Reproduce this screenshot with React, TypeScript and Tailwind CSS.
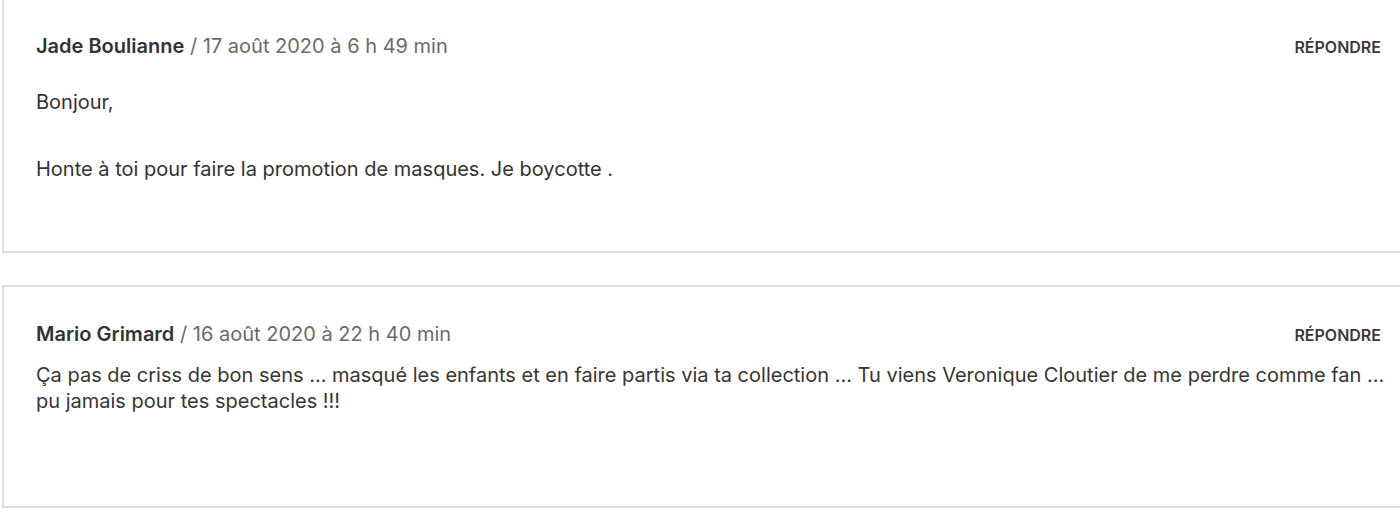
import React from 'react';

interface CommentProps {
  author: string;
  date: string;
  children: React.ReactNode;
  className?: string;
}

const Comment = ({ author, date, children, className = '' }: CommentProps) => (
  <div className={`ml-[2px] w-[1413px] shrink-0 border-2 border-[#dddddd] bg-white pl-8 pr-8 pt-[34px] ${className}`}>
    <div className="flex items-baseline justify-between text-[20px] leading-[26px]">
      <div>
        <span className="font-semibold text-[#333333]">{author}</span>
        <span className="text-[#6b6b6b]"> / {date}</span>
      </div>
      <a href="#" className="text-[16px] font-semibold uppercase text-[#3a3a3a]">Répondre</a>
    </div>
    {children}
  </div>
);

export default function App() {
  return (
    <div className="w-full overflow-hidden bg-white font-['Inter',sans-serif] text-[20px] leading-[26px] text-[#333333]">
      <Comment author="Jade Boulianne" date="17 août 2020 à 6 h 49 min" className="-mt-[3px] pb-[69px]">
        <p className="mt-[29px]">Bonjour,</p>
        <p className="mt-[41px]">Honte à toi pour faire la promotion de masques. Je boycotte .</p>
      </Comment>
      <Comment author="Mario Grimard" date="16 août 2020 à 22 h 40 min" className="mt-8 pb-[92px]">
        <p className="mt-[14px] -mr-4 text-[#363636]">
          Ça pas de criss de bon sens … masqué les enfants et en faire partis via ta collection … Tu viens Veronique Cloutier de me perdre comme fan … pu jamais pour tes spectacles !!!
        </p>
      </Comment>
      <div className="h-4" />
    </div>
  );
}
